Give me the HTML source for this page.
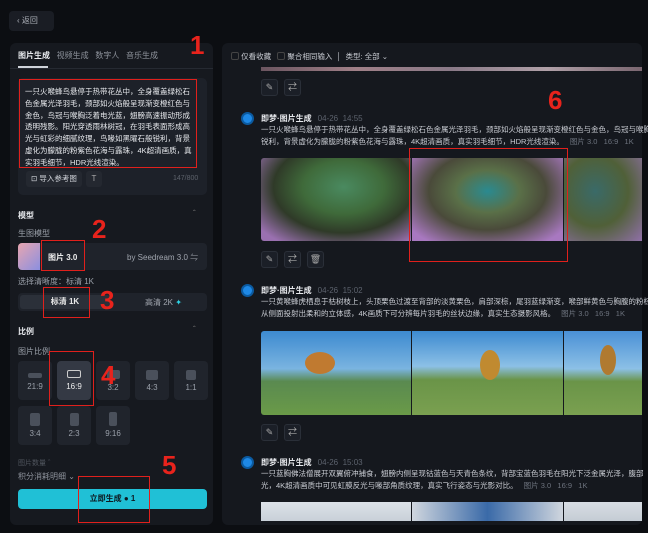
<!DOCTYPE html><html><head><meta charset="utf-8"><style>
*{margin:0;padding:0;box-sizing:border-box}
body{width:648px;height:533px;background:#0c0e12;font-family:"Liberation Sans","Noto Sans CJK SC",sans-serif;color:#d8dbe2;position:relative;overflow:hidden;font-size:8px}
.a{position:absolute}
.red{border:1.5px solid #e0201c}
.rn{color:#e8231c;font-family:"Liberation Sans",sans-serif;font-weight:bold;font-size:26px}
.tile{position:absolute;width:34px;height:39px;background:#20242c;border-radius:4px;color:#9aa0aa;font-size:8px;text-align:center}
.tile i{display:block;margin:0 auto;background:#4a505b;border-radius:2px}
.ib{position:absolute;width:17px;height:17px;border:1px solid #2a2f38;background:#1b1f27;border-radius:3px;color:#aaa;font-size:9px;text-align:center;line-height:15px}
.hdr{position:absolute;font-size:8px;color:#e6e8ec;font-weight:bold}
.hdr span{color:#5c626d;font-weight:normal;margin-left:6px}
.txt{position:absolute;font-size:7.5px;line-height:12px;color:#c9ccd3;white-space:nowrap}
.tag{color:#6d737e;margin-left:6px}
.logo{position:absolute;width:13px;height:13px;border-radius:50%;background:#1e88e5;border:2px solid #0b5aa0}
</style></head><body>
<div class="a" style="left:9px;top:11px;width:45px;height:20px;background:#1a1d24;border-radius:4px;color:#aeb2ba;font-size:8px;line-height:20px;padding-left:8px">‹ 返回</div>

<div class="a" style="left:10px;top:43px;width:203px;height:482px;background:#16191f;border-radius:6px"></div>
<div class="a" style="left:18px;top:50px;font-size:8px;color:#8d929b;white-space:nowrap"><b style="color:#e8eaee">图片生成</b>&nbsp;&nbsp; 视频生成 &nbsp; 数字人 &nbsp; 音乐生成</div>
<div class="a" style="left:18px;top:66px;width:30px;height:2px;background:#cfd3da"></div>
<div class="a" style="left:10px;top:68px;width:203px;height:1px;background:#262a32"></div>
<div class="a" style="left:18px;top:78px;width:189px;height:117px;background:#1d2129;border-radius:5px"></div>
<div class="a" style="left:25px;top:86px;width:172px;font-size:7.5px;line-height:11.8px;color:#e6e8ec">一只火喉蜂鸟悬停于热带花丛中，全身覆盖绿松石色金属光泽羽毛，颈部如火焰般呈现渐变橙红色与金色，鸟冠与喉胸泛着电光蓝，翅膀高速振动形成透明残影。阳光穿透雨林树冠，在羽毛表面形成高光与虹彩的细腻纹理，鸟喙如黑曜石般锐利，背景虚化为朦胧的粉紫色花海与露珠，4K超清画质，真实羽毛细节，HDR光线渲染。</div>
<div class="a red" style="left:19px;top:79px;width:178px;height:89px"></div>
<div class="a" style="left:26px;top:171px;width:56px;height:16px;background:#242830;border-radius:3px;color:#cfd2d8;font-size:7.5px;line-height:16px;padding-left:5px">⊡ 导入参考图</div>
<div class="a" style="left:86px;top:171px;width:16px;height:16px;background:#242830;border-radius:3px;color:#aaa;font-size:8px;line-height:16px;text-align:center">T</div>
<div class="a" style="left:173px;top:175px;color:#5d626b;font-size:7px">147/800</div>

<div class="a" style="left:18px;top:210px;font-weight:bold;color:#e6e8ec">模型</div>
<div class="a" style="left:193px;top:209px;color:#777">ˆ</div>
<div class="a" style="left:18px;top:228px;color:#9aa0a9">生图模型</div>
<div class="a" style="left:18px;top:243px;width:189px;height:27px;background:#1f232b;border-radius:4px"></div>
<div class="a" style="left:18px;top:243px;width:22px;height:27px;border-radius:4px 0 0 4px;background:linear-gradient(135deg,#e8a6b0,#8b8fe0)"></div>
<div class="a" style="left:48px;top:252px;font-weight:bold;color:#eee">图片 3.0</div>
<div class="a" style="left:127px;top:252px;color:#a0a5ae">by Seedream 3.0 ⇋</div>
<div class="a red" style="left:41px;top:240px;width:44px;height:31px"></div>
<div class="a rn" style="left:92px;top:214px">2</div>

<div class="a" style="left:18px;top:276px;color:#9aa0a9">选择清晰度：标清 1K</div>
<div class="a" style="left:18px;top:293px;width:189px;height:18px;background:#1f232b;border-radius:4px"></div>
<div class="a" style="left:20px;top:295px;width:90px;height:14px;background:#2b3039;border-radius:3px;text-align:center;line-height:14px;font-weight:bold;color:#e8e8e8">标清 1K</div>
<div class="a" style="left:145px;top:297px;color:#a0a5ae">高清 2K <span style="color:#2dd4e6">✦</span></div>
<div class="a red" style="left:43px;top:287px;width:47px;height:31px"></div>
<div class="a rn" style="left:100px;top:285px">3</div>

<div class="a" style="left:18px;top:326px;font-weight:bold;color:#e6e8ec">比例</div>
<div class="a" style="left:193px;top:325px;color:#777">ˆ</div>
<div class="a" style="left:18px;top:346px;color:#9aa0a9">图片比例</div>
<div class="tile" style="left:18px;top:361px"><i style="width:14px;height:5px;margin-top:12px"></i><div style="margin-top:4px">21:9</div></div>
<div class="tile" style="left:57px;top:361px;background:#343944;color:#eee"><i style="width:14px;height:8px;margin-top:9px;background:none;border:1.5px solid #ccc"></i><div style="margin-top:4px">16:9</div></div>
<div class="tile" style="left:96px;top:361px"><i style="width:13px;height:9px;margin-top:9px"></i><div style="margin-top:4px">3:2</div></div>
<div class="tile" style="left:135px;top:361px"><i style="width:12px;height:10px;margin-top:9px"></i><div style="margin-top:3px">4:3</div></div>
<div class="tile" style="left:174px;top:361px"><i style="width:10px;height:10px;margin-top:9px"></i><div style="margin-top:3px">1:1</div></div>
<div class="tile" style="left:18px;top:406px"><i style="width:10px;height:13px;margin-top:7px"></i><div style="margin-top:3px">3:4</div></div>
<div class="tile" style="left:57px;top:406px"><i style="width:9px;height:13px;margin-top:7px"></i><div style="margin-top:3px">2:3</div></div>
<div class="tile" style="left:96px;top:406px"><i style="width:8px;height:14px;margin-top:6px"></i><div style="margin-top:3px">9:16</div></div>
<div class="a red" style="left:49px;top:351px;width:45px;height:55px"></div>
<div class="a rn" style="left:101px;top:360px">4</div>

<div class="a" style="left:18px;top:458px;color:#50555e;font-size:7px">图片数量 ˆ</div>
<div class="a" style="left:18px;top:471px;color:#8d929b">积分消耗明细 ⌄</div>
<div class="a" style="left:18px;top:489px;width:189px;height:20px;background:#20c0d6;border-radius:4px;text-align:center;line-height:20px;color:#0d1a22;font-weight:bold">立即生成 ● 1</div>
<div class="a red" style="left:78px;top:476px;width:72px;height:47px"></div>
<div class="a rn" style="left:162px;top:450px">5</div>
<div class="a rn" style="left:190px;top:30px">1</div>

<div class="a" style="left:222px;top:43px;width:420px;height:482px;background:#15181e;border-radius:6px"></div>
<div class="a" style="left:231px;top:51px;color:#c8cbd2;font-size:7.5px;white-space:nowrap"><span style="display:inline-block;width:8px;height:8px;border:1px solid #444;border-radius:2px;vertical-align:-1px"></span> 仅看收藏 &nbsp; <span style="display:inline-block;width:8px;height:8px;border:1px solid #444;border-radius:2px;vertical-align:-1px"></span> 聚合相同输入 &nbsp;│&nbsp; 类型: 全部 ⌄</div>
<div class="a" style="left:261px;top:67px;width:381px;height:4px;background:linear-gradient(90deg,#6b5560,#a08088,#8a7a88,#b0a0a8,#7a6670)"></div>
<div class="ib" style="left:261px;top:79px">✎</div><div class="ib" style="left:284px;top:79px">⇄</div>

<div class="logo" style="left:241px;top:112px"></div>
<div class="hdr" style="left:261px;top:113px">即梦·图片生成<span>04-26 &nbsp;14:55</span></div>
<div class="txt" style="left:261px;top:124px">一只火喉蜂鸟悬停于热带花丛中，全身覆盖绿松石色金属光泽羽毛，颈部如火焰般呈现渐变橙红色与金色，鸟冠与喉胸<br>锐利，背景虚化为朦胧的粉紫色花海与露珠，4K超清画质，真实羽毛细节，HDR光线渲染。<span class="tag">图片 3.0 &nbsp; 16:9 &nbsp; 1K</span></div>
<div class="a" style="left:261px;top:158px;width:150px;height:83px;background:radial-gradient(ellipse at 55% 35%,#4a8a60 0,#3f6a3a 35%,#2f3a28 60%,#9a70b0 90%);border-radius:3px 0 0 3px"></div>
<div class="a" style="left:412px;top:158px;width:151px;height:83px;background:radial-gradient(ellipse at 50% 40%,#2a8a90 0,#5a7048 30%,#4a4a3a 55%,#a878c0 90%)"></div>
<div class="a" style="left:564px;top:158px;width:78px;height:83px;background:radial-gradient(ellipse at 40% 40%,#3a6a68,#506038 50%,#9070a8)"></div>
<div class="a red" style="left:409px;top:148px;width:159px;height:114px"></div>
<div class="a rn" style="left:548px;top:85px">6</div>
<div class="ib" style="left:261px;top:251px">✎</div><div class="ib" style="left:284px;top:251px">⇄</div><div class="ib" style="left:307px;top:251px">🗑</div>

<div class="logo" style="left:241px;top:284px"></div>
<div class="hdr" style="left:261px;top:285px">即梦·图片生成<span>04-26 &nbsp;15:02</span></div>
<div class="txt" style="left:261px;top:296px">一只黄喉蜂虎栖息于枯树枝上，头顶栗色过渡至背部的淡黄栗色，肩部深棕，尾羽蓝绿渐变，喉部鲜黄色与胸腹的粉棕<br>从侧面投射出柔和的立体感，4K画质下可分辨每片羽毛的丝状边缘，真实生态摄影风格。<span class="tag">图片 3.0 &nbsp; 16:9 &nbsp; 1K</span></div>
<div class="a" style="left:261px;top:331px;width:150px;height:84px;background:linear-gradient(180deg,#3d8ad0 0,#7ab4e0 45%,#5a8a50 60%,#6a9a48 100%);border-radius:3px 0 0 3px"></div>
<div class="a" style="left:412px;top:331px;width:151px;height:84px;background:linear-gradient(180deg,#3d8ad0 0,#8cc0e6 42%,#6a9448 58%,#7aa050 100%)"></div>
<div class="a" style="left:564px;top:331px;width:78px;height:84px;background:linear-gradient(180deg,#4a90d6 0,#8cc0e6 45%,#6a9448 60%,#7aa050 100%)"></div>
<div class="a" style="left:305px;top:352px;width:30px;height:22px;background:#c07a30;border-radius:50%"></div>
<div class="a" style="left:480px;top:350px;width:20px;height:30px;background:#c08a30;border-radius:50%"></div>
<div class="a" style="left:600px;top:345px;width:16px;height:30px;background:#b07a30;border-radius:50%"></div>
<div class="ib" style="left:261px;top:424px">✎</div><div class="ib" style="left:284px;top:424px">⇄</div>

<div class="logo" style="left:241px;top:456px"></div>
<div class="hdr" style="left:261px;top:457px">即梦·图片生成<span>04-26 &nbsp;15:03</span></div>
<div class="txt" style="left:261px;top:468px">一只蓝胸佛法僧展开双翼俯冲捕食，翅膀内侧呈现钴蓝色与天青色条纹，背部宝蓝色羽毛在阳光下泛金属光泽，腹部<br>光，4K超清画质中可见虹膜反光与喙部角质纹理，真实飞行姿态与光影对比。<span class="tag">图片 3.0 &nbsp; 16:9 &nbsp; 1K</span></div>
<div class="a" style="left:261px;top:502px;width:150px;height:19px;background:linear-gradient(#dde2e8,#c8d0d8)"></div>
<div class="a" style="left:412px;top:502px;width:151px;height:19px;background:linear-gradient(90deg,#d0d6de,#3a6aa8 50%,#d0d6de)"></div>
<div class="a" style="left:564px;top:502px;width:78px;height:19px;background:linear-gradient(#d8dde4,#c4ccd4)"></div>
</body></html>
